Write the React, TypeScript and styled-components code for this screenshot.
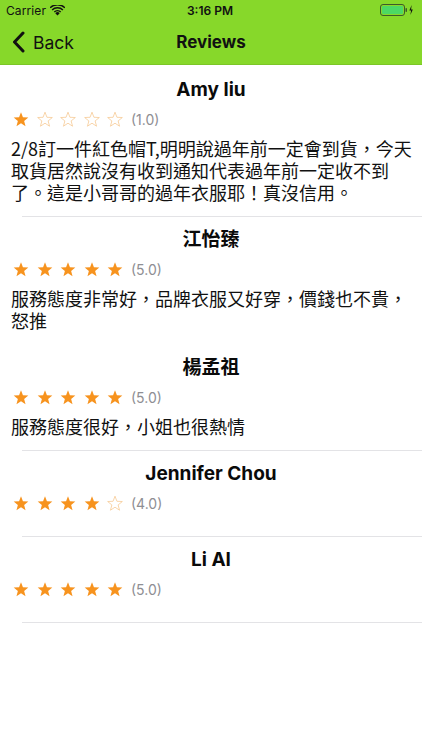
import styled, { createGlobalStyle } from "styled-components";

const GlobalStyle = createGlobalStyle`
  html, body {
    margin: 0;
    padding: 0;
    background: #ffffff;
  }
  body {
    font-family: Inter, "Noto Sans CJK TC", sans-serif;
    -webkit-font-smoothing: antialiased;
  }
`;

const Screen = styled.div`
  width: 422px;
  height: 750px;
  background: #ffffff;
  display: flex;
  flex-direction: column;
`;

// Barra verde de cima (status + navegação)
const Header = styled.header`
  background: #87d82a;
  border-bottom: 1px solid #7cc627;
`;

const StatusBar = styled.div`
  height: 20px;
  display: grid;
  grid-template-columns: 1fr auto 1fr;
  align-items: center;
  padding: 0 8px 0 6px;
  font-size: 12px;
  color: #111;
`;

const Carrier = styled.div`
  display: flex;
  align-items: center;
  gap: 4px;
  letter-spacing: 0.1px;
`;

const Clock = styled.div`
  font-weight: 600;
`;

const Battery = styled.div`
  display: flex;
  justify-content: flex-end;
  align-items: center;
`;

const NavBar = styled.div`
  height: 44px;
  display: grid;
  grid-template-columns: 1fr auto 1fr;
  align-items: center;
  padding: 0 12px;
`;

const BackButton = styled.div`
  display: flex;
  align-items: center;
  gap: 8px;
  font-size: 17.5px;
  color: #111;
`;

const Title = styled.div`
  font-size: 17px;
  font-weight: 700;
  color: #111;
`;

// Lista de avaliações
const List = styled.div`
  padding-top: 2px;
`;

const Cell = styled.div<{ $divider: boolean }>`
  padding: 11px 11px 13px 11px;
  position: relative;
  border-bottom: 1px solid transparent;
  &::after {
    content: "";
    display: ${(p) => (p.$divider ? "block" : "none")};
    position: absolute;
    left: 22px;
    right: 0;
    bottom: -1px;
    height: 1px;
    background: #e3e3e6;
  }
`;

const Name = styled.div`
  text-align: center;
  font-size: 19px;
  line-height: 23px;
  font-weight: 700;
  color: #0a0a0a;
`;

const RatingRow = styled.div<{ $last: boolean }>`
  display: flex;
  align-items: center;
  height: 20px;
  margin-top: 8px;
  margin-bottom: ${(p) => (p.$last ? "10px" : "0")};
  padding-left: 2px;
`;

const Stars = styled.div`
  display: flex;
  gap: 7.5px;
`;

const Score = styled.span`
  margin-left: 8px;
  font-size: 14px;
  color: #8e8e93;
`;

const Comment = styled.p`
  margin: 8px 0 0;
  width: 410px;
  font-size: 18px;
  line-height: 22px;
  color: #111;
  font-family: "Noto Sans CJK TC", sans-serif;
  line-break: strict;
`;

type Review = {
  name: string;
  rating: number;
  comment?: string;
  divider: boolean;
};

const reviews: Review[] = [
  {
    name: "Amy liu",
    rating: 1,
    comment:
      "2/8訂一件紅色帽T,明明說過年前一定會到貨，今天取貨居然說沒有收到通知代表過年前一定收不到了。這是小哥哥的過年衣服耶！真沒信用。",
    divider: true,
  },
  {
    name: "江怡臻",
    rating: 5,
    comment: "服務態度非常好，品牌衣服又好穿，價錢也不貴，怒推",
    divider: false,
  },
  {
    name: "楊孟祖",
    rating: 5,
    comment: "服務態度很好，小姐也很熱情",
    divider: true,
  },
  { name: "Jennifer Chou", rating: 4, divider: true },
  { name: "Li AI", rating: 5, divider: true },
];

function Star({ filled }: { filled: boolean }) {
  return (
    <svg width="16" height="16" viewBox="0 0 24 24">
      <path
        d="M12 1.8l2.9 7.6 8.1.4-6.3 5.1 2.1 7.9L12 18.3l-6.8 4.5 2.1-7.9L1 9.8l8.1-.4z"
        fill={filled ? "#f7931e" : "none"}
        stroke={filled ? "#f7931e" : "#f6c58c"}
        strokeWidth={filled ? 0 : 1.1}
        strokeLinejoin="round"
      />
    </svg>
  );
}

function Wifi() {
  return (
    <svg width="15" height="11" viewBox="0 0 15 11">
      <path d="M7.5 10.5L5.3 8.2a3.1 3.1 0 0 1 4.4 0z" fill="#111" />
      <path d="M3.8 6.6a5.3 5.3 0 0 1 7.4 0l-1 1a3.9 3.9 0 0 0-5.4 0z" fill="#111" />
      <path d="M1.6 4.4a8.4 8.4 0 0 1 11.8 0l-1 1a7 7 0 0 0-9.8 0z" fill="#111" />
      <path d="M-0.4 2.3a11.2 11.2 0 0 1 15.8 0l-1 1A9.8 9.8 0 0 0 0.6 3.3z" fill="#111" />
    </svg>
  );
}

function BatteryIcon() {
  return (
    <svg width="34" height="12" viewBox="0 0 34 12">
      <rect x="0.5" y="0.5" width="24" height="11" rx="2.5" fill="none" stroke="#3d5a2a" />
      <rect x="2" y="2" width="21" height="8" rx="1.3" fill="#4cd964" />
      <rect x="25.5" y="4" width="1.5" height="4" rx="0.7" fill="#3d5a2a" />
      <path d="M31.6 1L29.4 6.4h1.7L30.4 11l2.4-5.6h-1.7z" fill="#111" />
    </svg>
  );
}

function Chevron() {
  return (
    <svg width="13" height="22" viewBox="0 0 13 22">
      <path
        d="M11 2L2.5 11 11 20"
        fill="none"
        stroke="#111"
        strokeWidth="3"
        strokeLinecap="round"
        strokeLinejoin="round"
      />
    </svg>
  );
}

export default function App() {
  return (
    <Screen>
      <GlobalStyle />
      <Header>
        <StatusBar>
          <Carrier>
            Carrier <Wifi />
          </Carrier>
          <Clock>3:16 PM</Clock>
          <Battery>
            <BatteryIcon />
          </Battery>
        </StatusBar>
        <NavBar>
          <BackButton>
            <Chevron />
            Back
          </BackButton>
          <Title>Reviews</Title>
          <div />
        </NavBar>
      </Header>

      <List>
        {reviews.map((r) => (
          <Cell key={r.name} $divider={r.divider}>
            <Name>{r.name}</Name>
            <RatingRow $last={!r.comment}>
              <Stars>
                {[1, 2, 3, 4, 5].map((i) => (
                  <Star key={i} filled={i <= r.rating} />
                ))}
              </Stars>
              <Score>({r.rating.toFixed(1)})</Score>
            </RatingRow>
            {r.comment && <Comment>{r.comment}</Comment>}
          </Cell>
        ))}
      </List>
    </Screen>
  );
}
